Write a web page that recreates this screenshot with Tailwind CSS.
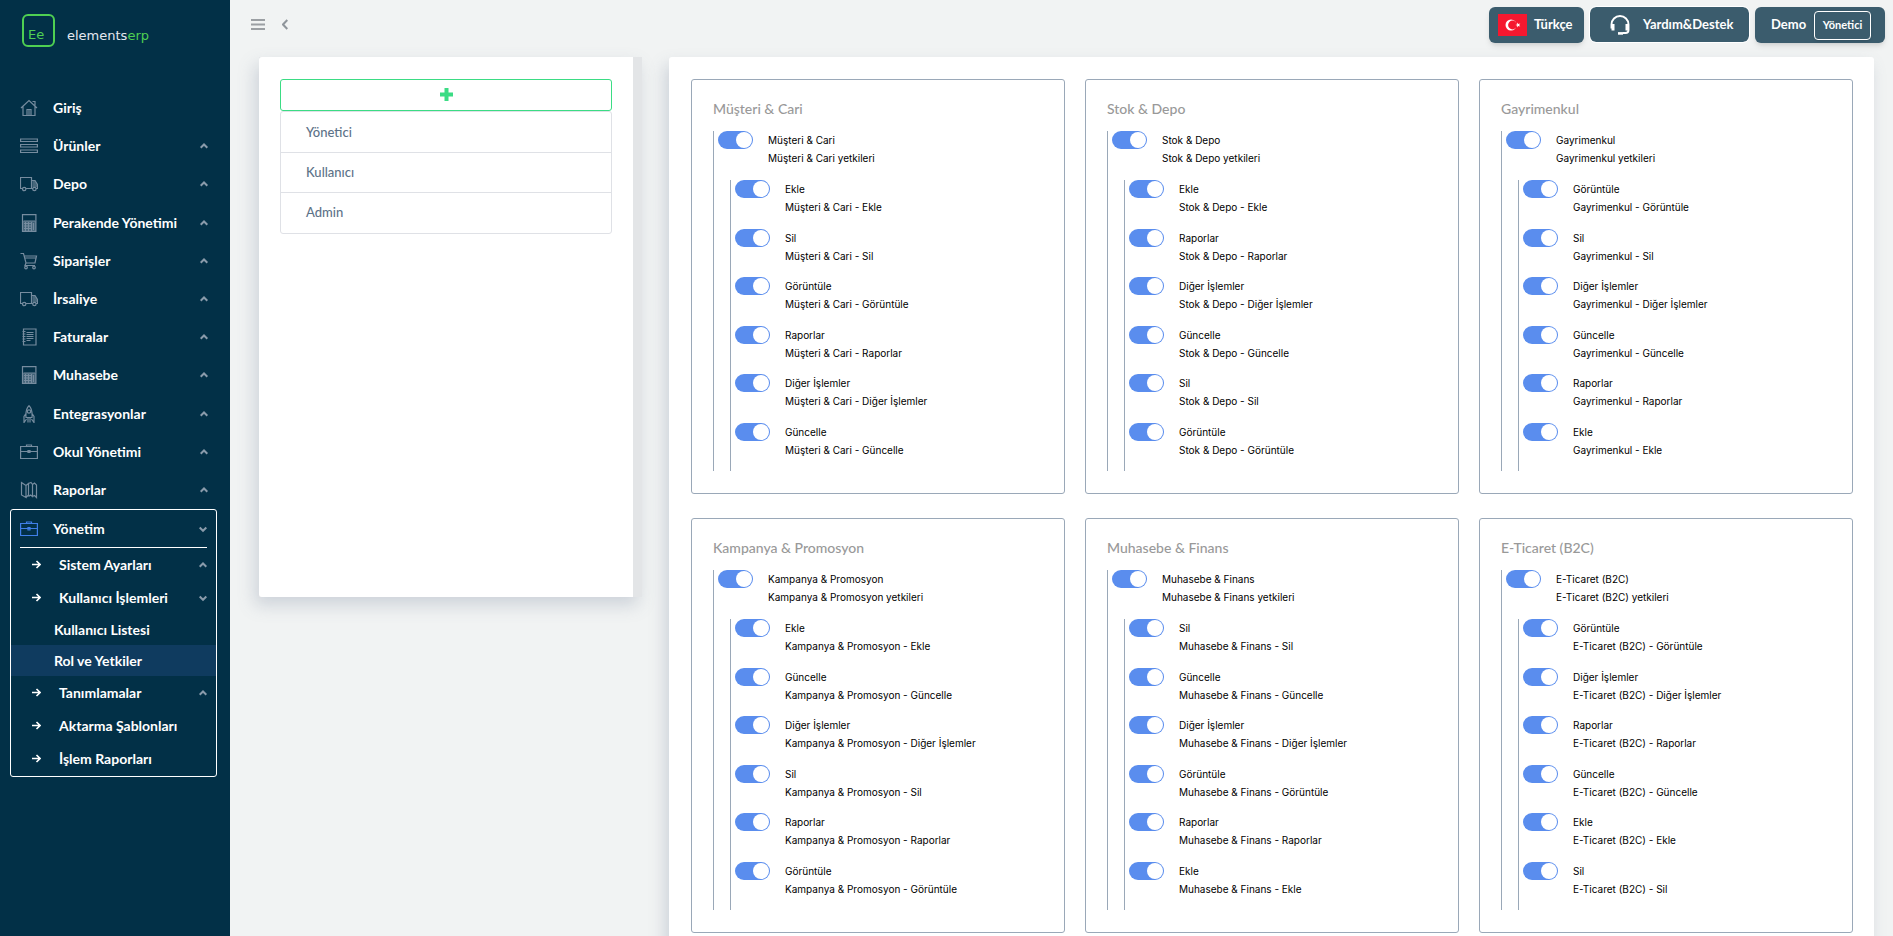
<!DOCTYPE html>
<html lang="tr">
<head>
    <meta charset="UTF-8">
    <meta name="viewport" content="width=device-width, initial-scale=1.0">
    <title>elementserp - Rol ve Yetkiler</title>
    <script src="https://cdn.jsdelivr.net/npm/@tailwindcss/browser@4"></script>
</head>
<body class="bg-[#f1f3f3] font-['Lato',sans-serif] text-[#212529]">

<div class="flex h-screen overflow-hidden">

    <!-- Sidebar -->
    <aside class="w-[230px] shrink-0 bg-[#023047] text-white">
        <a href="#" class="flex h-[89px] items-start gap-3 pt-3.5 pl-[22px] font-['DejaVu_Sans',sans-serif] text-[13px] leading-4">
            <span class="flex h-[33px] w-[33px] items-end rounded-md border-2 border-[#4fcf52] px-1 pb-0.5 text-[13px] text-[#4fcf52]">Ee</span>
            <span class="pt-3.5 text-[#e4e8f0]">elements<span class="text-[#4fcf52]">erp</span></span>
        </a>

        <nav>
            <ul id="menu" class="grid h-[420px] auto-rows-fr"></ul>

            <!-- Open group -->
            <div class="mr-[13px] ml-2.5 rounded-[3px] border border-white pb-px text-sm font-bold">
                <button class="mx-[9px] flex h-[38px] w-[187px] items-center border-b border-white text-left">
                    <svg class="h-[18px] w-[18px] text-[#3f7fe8]" viewBox="0 0 18 18" fill="none" stroke="currentColor" stroke-width="1.200"><path d="M.6 3.500h16.800v12H.6zM.6 8.500h16.800M6.500 3.500v-1.500h5v1.500M8 7.500h2v2.500H8z"/></svg>
                    <span class="ml-[15px] flex-1">Yönetim</span>
                    <svg class="h-2 w-2 text-[#8a9bab]" viewBox="0 0 8 8" fill="none" stroke="currentColor" stroke-width="2"><path d="M.7 2.500 4 5.800l3.300-3.300"/></svg>
                </button>
                <ul id="submenu"></ul>
            </div>
        </nav>
    </aside>

    <!-- Content -->
    <div class="flex min-w-0 flex-1 flex-col">
        <header class="flex h-[57px] shrink-0 items-start pt-[7px] pr-2 pl-[21px]">
            <button aria-label="Menü" class="mt-3 text-[#9b9fa3]">
                <svg class="h-[11px] w-3.5" viewBox="0 0 14 11" stroke="currentColor" stroke-width="2"><path d="M0 1h14M0 5.500h14M0 10h14"/></svg>
            </button>
            <button aria-label="Geri" class="mt-3 ml-[17px] text-[#8f959b]">
                <svg class="h-[11px] w-1.5" viewBox="0 0 6 11" fill="none" stroke="currentColor" stroke-width="2"><path d="M5.300 1 1 5.500 5.300 10"/></svg>
            </button>
            <div class="ml-auto flex items-start gap-1.5 text-[13px] font-bold text-white">
                <button class="flex h-9 w-[95px] items-center rounded-md bg-[#3b5c6d] pl-[9px] shadow-md">
                    <svg class="h-[22px] w-[29px]" viewBox="0 0 29 22">
                        <path fill="#f5182f" d="M0 0h29v22H0z"/>
                        <circle cx="13" cy="11" r="5.500" fill="#fff"/>
                        <circle cx="14.500" cy="11" r="4.400" fill="#f5182f"/>
                        <path fill="#fff" d="m17.300 11 1.900-.6V8.400l1.200 1.600 1.900-.6-1.200 1.600 1.200 1.600-1.900-.6-1.200 1.600v-2z"/>
                    </svg>
                    <span class="ml-[7px]">Türkçe</span>
                </button>
                <button class="flex h-[35px] w-[159px] items-center rounded-md bg-[#3b5c6d] pl-5 outline outline-white">
                    <svg class="h-5 w-5" viewBox="0 0 20 20" fill="none" stroke="currentColor" stroke-width="1.900">
                        <path d="M1.500 13.500V9.500a8.300 8.300 0 0 1 17 0V15a3 3 0 0 1-3 3H13"/>
                        <path d="M3 9v6.500M17 9v6.500" stroke-width="3"/>
                        <path d="M8 18.400h5" stroke-width="2.600"/>
                    </svg>
                    <span class="ml-[13px]">Yardım&amp;Destek</span>
                </button>
                <div class="flex h-9 w-[130px] items-center rounded-md bg-[#3b5c6d] pl-4 shadow-md">
                    <span class="flex-1">Demo</span>
                    <button class="mr-3.5 h-[29px] w-[57px] rounded border border-white text-[11px] shadow-sm">Yönetici</button>
                </div>
            </div>
        </header>

        <main class="flex items-start pr-[19px] pl-[29px]">
            <!-- Roles -->
            <section class="flex w-[383px] shrink-0 bg-[#e3e5e7] shadow-[-4px_8px_16px_rgba(100,115,145,0.25)]">
                <div class="h-[540px] flex-1 rounded-l-[3px] bg-white px-[21px] pt-[22px]">
                    <button aria-label="Rol ekle" class="flex h-8 w-full items-center justify-center rounded-[3px] border border-[#3bdc84] pb-0.5 text-[#3bdc84]">
                        <svg class="h-[13px] w-[13px]" viewBox="0 0 13 13" fill="currentColor"><path d="M4.500 0h4v4.500H13v4H8.500V13h-4V8.500H0v-4h4.500z"/></svg>
                    </button>
                    <ul class="divide-y divide-[#dfe1e6] rounded-[3px] border border-[#dfe1e6] py-px text-[13px] font-medium text-[#5d7288]">
                        <li><a href="#" class="flex h-[39px] items-center pl-[25px]">Yönetici</a></li>
                        <li><a href="#" class="flex h-[39px] items-center pl-[25px]">Kullanıcı</a></li>
                        <li><a href="#" class="flex h-[39px] items-center pl-[25px]">Admin</a></li>
                    </ul>
                </div>
                <div class="w-[9px]"></div>
            </section>

            <!-- Permissions -->
            <section class="ml-[27px] flex-1 rounded-[3px] bg-white py-[22px] pr-[21px] pl-[22px] shadow-[-4px_8px_16px_rgba(100,115,145,0.25)]">
                <div id="cards" class="grid grid-cols-3 gap-x-5 gap-y-6"></div>
            </section>
        </main>
    </div>
</div>

<script>
    const icons = {
        home: '<path d="M1 9 9 1.500 17 9M3 7.500v9h12v-9M7 16.500v-6h4v6M9 10.500v6M12.500 2.500h2.500v4"/>',
        list: '<path d="M.6 2h16.800v2.500H.6zM.6 7.500h16.800V10H.6zM.6 13h16.800v2.500H.6z"/>',
        truck: '<path d="M2.500 13.500h-2v-11h11v11H6M11.500 5.500h3.500l2.500 4v4h-1.500M11.500 13.500H13"/><path fill="currentColor" d="M13 6.500h2l2 3v2h-4z" opacity=".6"/><circle cx="4.200" cy="14" r="1.700"/><circle cx="14.400" cy="14" r="1.700"/>',
        calc: '<path d="M2.500.6h13.400v16.800H2.500z"/><path fill="currentColor" stroke="none" opacity=".55" d="M3 7h13v10H3z"/><path d="M3.500 7h11.500M4 9.500h7M4 12h7M4 14.500h7M5.500 8v9M8.500 8v9M11.500 8v9M13.500 9v7"/>',
        cart: '<path d="M.5 1.500h3l2.500 9.500h9l1.500-7H4.300M4.800 6h11.200M6 11l-1 2.500h10"/><circle cx="6" cy="15.500" r="1.300"/><circle cx="14" cy="15.500" r="1.300"/>',
        invoice: '<path d="M3.500 1h12.500v16H3.500zM6.500 4.500h7M6.500 6.500h7M6.500 8.500h7M6.500 10.500h7M6.500 12.500h4M2.500 3.500h3M2.500 6h3M2.500 8.500h3M2.500 11h3M2.500 13.500h3"/>',
        rocket: '<path d="M9 .7C6.500 3 5.500 6 6 12.500h6C12.500 6 11.500 3 9 .7zM6 8.500l-2 3v6l2.500-3.500M12 8.500l2 3v6l-2.500-3.500M8 13v4.500M10 13v4.500"/><circle cx="9" cy="6.500" r="1.700"/>',
        briefcase: '<path d="M.6 3.500h16.800v12H.6zM.6 8.500h16.800M6.500 3.500v-1.500h5v1.500M8 7.500h2v2H8z"/>',
        map: '<path d="M1.500 1.500 6 4.500v12L1.500 14zM6 16.500l2.500-2.500V2.500L6 4.500M8.500 2.500 11 1.500l1.500 2v12L10.500 14l-2 1.500M12.500 3.500l2-1.500 2 2v12.500l-2-2-2 1"/>'
    };
    const up = '<svg class="h-2 w-2 text-[#8a9bab]" viewBox="0 0 8 8" fill="none" stroke="currentColor" stroke-width="2"><path d="M.7 5.800 4 2.500l3.300 3.300"/></svg>';
    const down = '<svg class="h-2 w-2 text-[#8a9bab]" viewBox="0 0 8 8" fill="none" stroke="currentColor" stroke-width="2"><path d="M.7 2.500 4 5.800l3.300-3.300"/></svg>';
    const arrow = '<svg class="h-[9px] w-[9px]" viewBox="0 0 9 9" fill="none" stroke="currentColor" stroke-width="1.600"><path d="M0 4.500h8M4.500 1 8 4.500 4.500 8"/></svg>';

    const menu = [
        ['home', 'Giriş'], ['list', 'Ürünler'], ['truck', 'Depo'], ['calc', 'Perakende Yönetimi'],
        ['cart', 'Siparişler'], ['truck', 'İrsaliye'], ['invoice', 'Faturalar'], ['calc', 'Muhasebe'],
        ['rocket', 'Entegrasyonlar'], ['briefcase', 'Okul Yönetimi'], ['map', 'Raporlar']
    ];
    document.getElementById('menu').innerHTML = menu.map(([icon, name], i) => `
        <li class="flex">
            <a href="#" class="flex flex-1 items-center pr-[22px] pl-5 text-sm font-bold">
                <svg class="h-[18px] w-[18px] text-[#768c9f]" viewBox="0 0 18 18" fill="none" stroke="currentColor" stroke-width="1.200">${icons[icon]}</svg>
                <span class="ml-[15px] flex-1">${name}</span>
                ${i ? up : ''}
            </a>
        </li>`).join('');

    const submenu = [
        ['Sistem Ayarları', up], ['Kullanıcı İşlemleri', down], ['Kullanıcı Listesi'], ['Rol ve Yetkiler'],
        ['Tanımlamalar', up], ['Aktarma Şablonları', ''], ['İşlem Raporları', '']
    ];
    document.getElementById('submenu').innerHTML = submenu.map(([name, mark]) => mark === undefined
        ? `<li><a href="#" class="flex h-[31px] items-center pl-[43px] ${name === 'Rol ve Yetkiler' ? 'bg-[#0f3b5f]' : ''}">${name}</a></li>`
        : `<li><a href="#" class="flex h-[33px] items-center pr-[9px] pl-[21px]">${arrow}<span class="ml-[18px] flex-1">${name}</span>${mark}</a></li>`
    ).join('');

    const groups = [
        ['Müşteri & Cari', ['Ekle', 'Sil', 'Görüntüle', 'Raporlar', 'Diğer İşlemler', 'Güncelle']],
        ['Stok & Depo', ['Ekle', 'Raporlar', 'Diğer İşlemler', 'Güncelle', 'Sil', 'Görüntüle']],
        ['Gayrimenkul', ['Görüntüle', 'Sil', 'Diğer İşlemler', 'Güncelle', 'Raporlar', 'Ekle']],
        ['Kampanya & Promosyon', ['Ekle', 'Güncelle', 'Diğer İşlemler', 'Sil', 'Raporlar', 'Görüntüle']],
        ['Muhasebe & Finans', ['Sil', 'Güncelle', 'Diğer İşlemler', 'Görüntüle', 'Raporlar', 'Ekle']],
        ['E-Ticaret (B2C)', ['Görüntüle', 'Diğer İşlemler', 'Raporlar', 'Güncelle', 'Ekle', 'Sil']]
    ];

    function toggle(id, title, detail) {
        return `
            <div class="flex items-start gap-[15px] pl-1 font-['Inter',sans-serif] text-[10px] leading-[18px] text-black">
                <input type="checkbox" id="${id}" checked class="h-[18px] w-[35px] shrink-0 appearance-none rounded-full bg-gray-300 p-px before:block before:h-4 before:w-4 before:rounded-full before:bg-white checked:bg-[#5a8dee] checked:before:ml-auto">
                <label for="${id}">${title}<br>${detail}</label>
            </div>`;
    }

    document.getElementById('cards').innerHTML = groups.map(([group, actions], i) => {
        const name = group.replace('&', '&amp;');
        return `
            <article class="rounded-[3px] border border-[#9aa8b8] px-[21px] pt-[21px] pb-[22px]">
                <h2 class="mb-3.5 text-sm leading-4 font-medium text-[#999]">${name}</h2>
                <div class="border-l border-[#9aa8b8]">
                    <div class="h-[49px]">${toggle(`p${i}`, name, `${name} yetkileri`)}</div>
                    <div class="ml-4 grid h-[291px] auto-rows-fr border-l border-[#9aa8b8]">
                        ${actions.map((action, n) => toggle(`p${i}-${n}`, action, `${name} - ${action}`)).join('')}
                    </div>
                </div>
            </article>`;
    }).join('');
</script>

</body>
</html>
